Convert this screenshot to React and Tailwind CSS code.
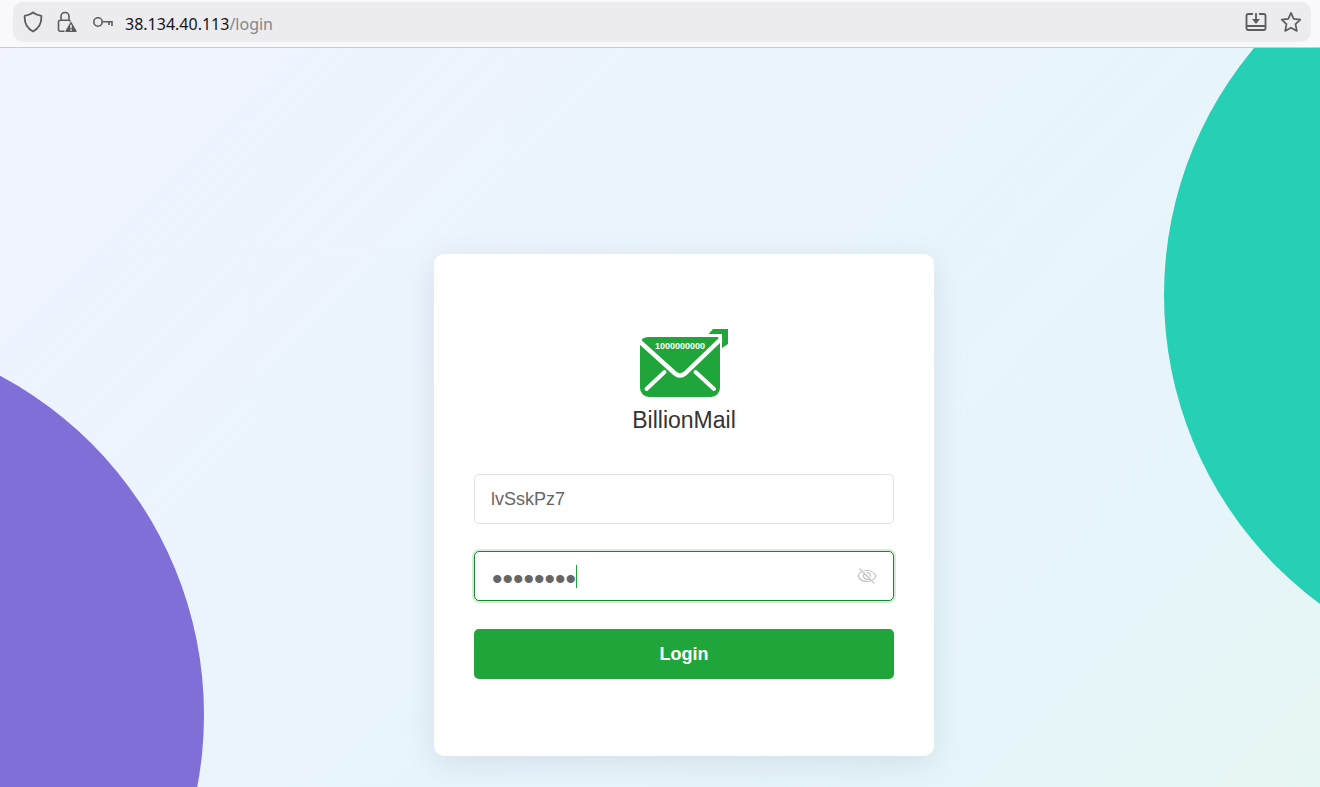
import React, { useState } from "react";

const ShieldIcon = () => (
  <svg width="20" height="22" viewBox="0 0 20 22" fill="none" stroke="#5b5b60" strokeWidth="1.8" strokeLinejoin="round">
    <path d="M10 1.500Q13 4 18.300 4.800C18.800 11.500 16.500 17 10 20.500 3.500 17 1.200 11.500 1.700 4.800Q7 4 10 1.500z" />
  </svg>
);

const LockWarningIcon = () => (
  <svg width="20" height="22" viewBox="0 0 20 22" fill="none" stroke="#5b5b60" strokeWidth="1.6">
    <path d="M7.500 20.200H3.200A1.700 1.700 0 0 1 1.500 18.500V11a1.700 1.700 0 0 1 1.700-1.700h8.600A1.700 1.700 0 0 1 13.300 10.500M4 9.300V5.500a4 4 0 0 1 8 0v3.800" />
    <path d="M14 11.800 18.900 20.300H9.100z" fill="#5b5b60" strokeLinejoin="round" />
    <path d="M14 13.800v3.400M14 18.300v1.400" stroke="#ececee" strokeWidth="1.600" />
  </svg>
);

const KeyIcon = () => (
  <svg width="22" height="12" viewBox="0 0 22 12" fill="none" stroke="#5b5b60" strokeWidth="1.600">
    <circle cx="5" cy="6" r="4.200" />
    <path d="M9.200 5.800h10.600M16 6v3M19 6v4" />
  </svg>
);

const InstallIcon = () => (
  <svg width="22" height="20" viewBox="0 0 22 20" fill="none" stroke="#5b5b60" strokeWidth="1.800">
    <path d="M8 2H3.200A1.700 1.700 0 0 0 1.500 3.700v12.600A1.700 1.700 0 0 0 3.200 18h15.600a1.700 1.700 0 0 0 1.700-1.700V3.700A1.700 1.700 0 0 0 18.800 2H14M1.500 14h19M11 1v9" />
    <path d="M7 7h8L11 12z" fill="#5b5b60" stroke="none" />
  </svg>
);

const StarIcon = () => (
  <svg width="22" height="22" viewBox="0 0 22 22" fill="none" stroke="#5b5b60" strokeWidth="1.700" strokeLinejoin="round">
    <path d="M11 1.800l2.700 6.100 6.600.8-4.800 4.500 1.300 6.700L11 16.700l-5.800 3.200 1.300-6.700L1.700 8.700l6.600-.8z" />
  </svg>
);

const Logo = () => (
  <svg width="90" height="70" viewBox="0 0 90 70" fill="none">
    <path d="M74 1H89V16L83 20V6H69.500z" fill="#20a53a" />
    <path d="M9 9H79L81 14V60a9 9 0 0 1-9 9H10a9 9 0 0 1-9-9V15q2-6 8-6z" fill="#20a53a" />
    <path d="M0 13 36 45.500q5 4 10 0L82 11" stroke="#fff" strokeWidth="4.500" />
    <path d="M25.500 44 7.500 61M56.500 44 75 61" stroke="#fff" strokeWidth="4" strokeLinecap="round" />
    <text x="16" y="21" fill="#fff" fontFamily="Liberation Sans, sans-serif" fontSize="9" fontWeight="bold">
      1000000000
    </text>
  </svg>
);

const EyeOffIcon = () => (
  <svg width="20" height="16" viewBox="0 0 20 16" fill="none" stroke="#c2c2c2" strokeWidth="1.200" strokeLinecap="round">
    <path d="M5.500 3.300C3.500 4.300 1.800 6 1 8c1.500 3.500 5 5.500 9 5.500 1.300 0 2.600-.3 3.700-.7M8 2.600c5-.7 9.300 1.800 11 5.400-.6 1.500-1.600 2.600-3 3.600M7.500 5.500a3.500 3.500 0 0 0 4.500 5.300M10.500 4.600a3.500 3.500 0 0 1 3 3.700M3 1l14 14" />
  </svg>
);

const AddressBar = () => (
  <header className="h-12 shrink-0 border-b border-[#cccccf] bg-[#f9f9fb] pt-[2px] pr-[9px] pl-[13px]">
    <div className="flex h-10 items-center rounded-[10px] bg-[#ececee] pr-[9px] pl-[10px]">
      <ShieldIcon />
      <span className="ml-[14px]"><LockWarningIcon /></span>
      <span className="ml-4"><KeyIcon /></span>
      <p className="ml-[10px] flex-1 pt-[3px] font-['Noto_Sans',sans-serif] text-base leading-6 text-[#15141a]">
        38.134.40.113<span className="text-[#85858a]">/login</span>
      </p>
      <button type="button" aria-label="Install"><InstallIcon /></button>
      <button type="button" aria-label="Bookmark" className="ml-[13px]"><StarIcon /></button>
    </div>
  </header>
);

const LoginForm = () => {
  const [username, setUsername] = useState("lvSskPz7");
  const [password, setPassword] = useState("password");
  const [visible, setVisible] = useState(false);

  return (
    <form
      onSubmit={(e) => e.preventDefault()}
      className="relative w-[500px] rounded-[10px] bg-white px-10 pt-[74px] pb-[77px] shadow-[0_8px_32px_rgba(31,45,80,0.1)]"
    >
      <div className="flex flex-col items-center">
        <Logo />
        <h1 className="mt-[6px] text-[23px] leading-8 text-[#333]">BillionMail</h1>
      </div>

      <input
        type="text"
        aria-label="Username"
        value={username}
        onChange={(e) => setUsername(e.target.value)}
        className="mt-[38px] block h-[50px] w-full rounded-[5px] border border-[#e0e0e6] px-4 text-lg text-[#666] outline-none"
      />

      <div className="relative mt-[27px]">
        <input
          type={visible ? "text" : "password"}
          aria-label="Password"
          value={password}
          onChange={(e) => setPassword(e.target.value)}
          className="block h-[50px] w-full rounded-[5px] border border-[#18842e] pt-[5px] pr-12 pl-[17px] text-[30px] text-[#666] shadow-[0_0_0_2px_rgba(32,165,58,0.2)] outline-none"
        />
        <span className="absolute top-[14px] left-[102px] h-[23px] w-px bg-[#20a53a]" />
        <button
          type="button"
          aria-label="Show password"
          onClick={() => setVisible(!visible)}
          className="absolute top-[17px] right-[17px]"
        >
          <EyeOffIcon />
        </button>
      </div>

      <button type="submit" className="mt-7 h-[50px] w-full rounded-[5px] bg-[#20a53a] text-lg font-bold text-white">
        Login
      </button>
    </form>
  );
};

const App = () => (
  <div className="flex h-screen flex-col overflow-hidden font-['Liberation_Sans',Arial,sans-serif]">
    <AddressBar />
    <main className="relative flex flex-1 items-start justify-center overflow-hidden bg-[linear-gradient(135deg,#f0f3ff_0%,#eaf4fc_40%,#e6f5fa_80%,#e6f6f3_100%)] pt-[206px] pl-12">
      <div className="absolute -top-[137px] -right-[612px] size-[768px] rounded-full bg-[#26d0b4]" />
      <div className="absolute top-[283px] -left-[564px] size-[768px] rounded-full bg-[#806fd6]" />
      <LoginForm />
    </main>
  </div>
);

export default App;
